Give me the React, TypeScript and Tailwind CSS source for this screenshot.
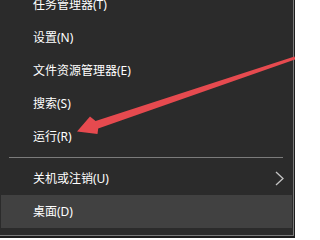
const items: { label: string; submenu?: boolean; active?: boolean; sep?: boolean }[] = [
  { label: "任务管理器(T)" },
  { label: "设置(N)" },
  { label: "文件资源管理器(E)" },
  { label: "搜索(S)" },
  { label: "运行(R)" },
  { label: "", sep: true },
  { label: "关机或注销(U)", submenu: true },
  { label: "桌面(D)", active: true },
];

export default function App() {
  return (
    <div className="relative h-[238px] w-[295px] overflow-hidden bg-[#1c1c1c] font-['Noto_Sans','Noto_Sans_CJK_SC',sans-serif] text-[12px] text-white">
      <div className="-mt-[12px] w-[294px] border-r border-b border-[#7a7a7a] bg-[#2b2b2b] pb-[7px]">
        {items.map((it, i) =>
          it.sep ? (
            <div key={i} className="py-[4px] pl-[9px] pr-[10px]">
              <div className="h-px bg-[#7b7b7b]" />
            </div>
          ) : (
            <div
              key={i}
              className={
                "mx-[1px] flex h-[33px] items-center justify-between pl-[32px] pr-[8px] " +
                (it.active ? "bg-[#414141]" : "")
              }
            >
              <span>{it.label}</span>
              {it.submenu && (
                <svg width="9" height="15" viewBox="0 0 9 15" fill="none">
                  <polyline points="1,1 8,7.5 1,14" stroke="#c4c4c4" strokeWidth="1.3" />
                </svg>
              )}
            </div>
          ),
        )}
      </div>

      {/* annotation arrow over the menu */}
      <svg className="pointer-events-none absolute left-0 top-0" width="295" height="238" viewBox="0 0 295 238">
        <polygon
          points="77,131.5 90,116.5 95.6,121.1 294.5,56.6 295.5,59.4 98.2,128.6 97.5,134"
          fill="#e64a4f"
        />
      </svg>
    </div>
  );
}
